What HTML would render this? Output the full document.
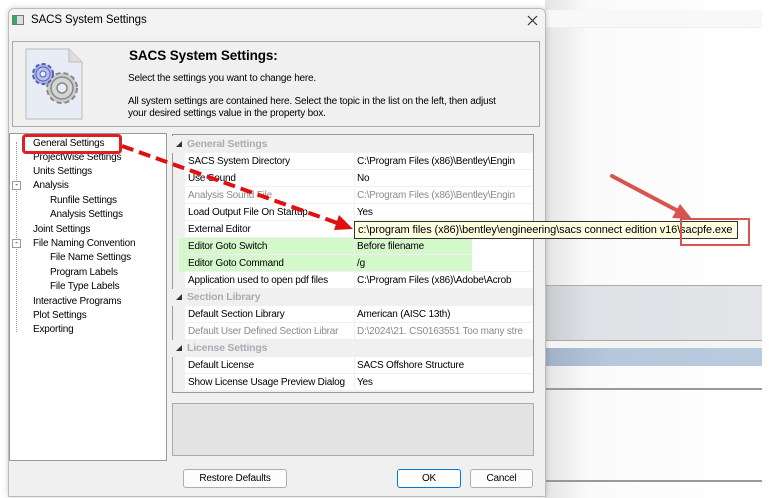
<!DOCTYPE html>
<html><head><style>
*{margin:0;padding:0;box-sizing:border-box}
body{width:770px;height:498px;overflow:hidden;background:#fff;font-family:"Liberation Sans",sans-serif;font-size:10px;letter-spacing:-0.2px;color:#000;position:relative}
.a{position:absolute}
.row{position:absolute;left:185px;width:348px;height:17px;border-bottom:1px solid #f0f0f0;background:#fff}
.row span{position:absolute;top:0;height:16px;line-height:17px;white-space:nowrap;overflow:hidden}
.row .n{left:3px;width:166px}
.row .v{left:169px;width:178px;border-left:1px solid #f0f0f0;padding-left:2px}
.hl{background:#d4f7cc}
.hl .v{border-left-color:#e6f9e0}
.cat{position:absolute;left:172px;width:361px;height:17px;color:#a8adb5;font-weight:bold;background:#f0f0f0;font-size:10.5px}
.cat span{position:absolute;left:15px;top:2px}
.cat i{position:absolute;left:4px;top:5px;width:0;height:0;border-left:6px solid transparent;border-bottom:6px solid #333}
.g{color:#8a8a8a}
.t{position:absolute;white-space:nowrap}
.btn{position:absolute;height:19px;border:1px solid #adadad;background:#fdfdfd;border-radius:3px;text-align:center;line-height:17px}
</style></head><body>
<div class="a" style="left:545px;top:0;width:217px;height:498px;background:linear-gradient(90deg,#e4e4e4,#fafafa 20%,#fff)"></div>
<div class="a" style="left:545px;top:10px;width:217px;height:18px;background:#f7f8fa;border-bottom:1px solid #eee"></div>
<div class="a" style="left:545px;top:285px;width:217px;height:55px;background:linear-gradient(90deg,#c8cad0,#dfe1e6 20%,#e2e4e8);border-top:1px solid #aaa"></div>
<div class="a" style="left:545px;top:340px;width:217px;height:8px;background:#f4f4f4;border-top:1px solid #aaa"></div>
<div class="a" style="left:545px;top:348px;width:217px;height:18px;background:linear-gradient(90deg,#9fb0c8,#b7c8de 30%,#b9cadf)"></div>
<div class="a" style="left:545px;top:388px;width:217px;height:2px;background:#999"></div>
<div class="a" style="left:545px;top:480px;width:217px;height:2px;background:#999"></div>

<div class="a" style="left:8px;top:8px;width:538px;height:489px;background:#f0f0f0;border:1px solid #bbb;border-radius:6px 6px 0 0;box-shadow:0 0 6px rgba(0,0,0,.2)"></div>
<div class="a" style="left:9px;top:9px;width:536px;height:26px;background:#f3f3f3;border-radius:6px 6px 0 0"></div>
<div class="a" style="left:12px;top:15px;width:12px;height:10px;border:1px solid #777;background:linear-gradient(90deg,#3a6 0 4px,#ddd 4px)"></div>
<div class="t" style="left:31px;top:14px;font-size:11.5px;letter-spacing:-0.1px">SACS System Settings</div>
<svg class="a" style="left:527px;top:15px" width="11" height="11"><path d="M1 1L10 10M10 1L1 10" stroke="#333" stroke-width="1.2"/></svg>

<div class="a" style="left:12px;top:41px;width:528px;height:86px;border:1px solid #aaa;background:#f0f0f0"></div>
<svg class="a" style="left:25px;top:48px" width="58" height="72" viewBox="0 0 58 72">
<path d="M1 1H44L57 14V71H1Z" fill="#e8ecf6" stroke="#bbb"/><path d="M44 1V14H57" fill="#ddd" stroke="#bbb"/>
<circle cx="37" cy="40" r="15" fill="#ccc" stroke="#888" stroke-width="2" stroke-dasharray="5 3"/><circle cx="37" cy="40" r="11" fill="#d4d4d4" stroke="#888" stroke-width="1.5"/><circle cx="37" cy="40" r="5" fill="#e8ecf6" stroke="#888" stroke-width="1.5"/>
<circle cx="18" cy="26" r="10" fill="#aab4e8" stroke="#5560b0" stroke-width="2" stroke-dasharray="4 2.5"/><circle cx="18" cy="26" r="7" fill="#b8c0ee" stroke="#5560b0"/><circle cx="18" cy="26" r="3" fill="#e8ecf6" stroke="#5560b0"/>
</svg>
<div class="t" style="left:129px;top:48px;font-size:13.5px;font-weight:bold;letter-spacing:-0.1px">SACS System Settings:</div>
<div class="t" style="left:128px;top:73px">Select the settings you want to change here.</div>
<div class="t" style="left:128px;top:96px;line-height:12px">All system settings are contained here. Select the topic in the list on the left, then adjust<br>your desired settings value in the property box.</div>

<div class="a" style="left:9px;top:133px;width:158px;height:328px;background:#fff;border:1px solid #999"></div>
<div class="a" style="left:16px;top:142px;width:0;height:190px;border-left:1px dotted #999"></div>
<div class="t" style="left:33px;top:138px">General Settings</div>
<div class="t" style="left:33px;top:152px">ProjectWise Settings</div>
<div class="t" style="left:33px;top:166px">Units Settings</div>
<div class="t" style="left:33px;top:180px">Analysis</div>
<div class="t" style="left:50px;top:195px">Runfile Settings</div>
<div class="t" style="left:50px;top:209px">Analysis Settings</div>
<div class="t" style="left:33px;top:224px">Joint Settings</div>
<div class="t" style="left:33px;top:238px">File Naming Convention</div>
<div class="t" style="left:50px;top:252px">File Name Settings</div>
<div class="t" style="left:50px;top:267px">Program Labels</div>
<div class="t" style="left:50px;top:281px">File Type Labels</div>
<div class="t" style="left:33px;top:296px">Interactive Programs</div>
<div class="t" style="left:33px;top:310px">Plot Settings</div>
<div class="t" style="left:33px;top:324px">Exporting</div>
<div class="a" style="left:12px;top:181px;width:9px;height:9px;border:1px solid #999;background:#fff;font-size:8px;line-height:6px;text-align:center">-</div>
<div class="a" style="left:12px;top:239px;width:9px;height:9px;border:1px solid #999;background:#fff;font-size:8px;line-height:6px;text-align:center">-</div>
<div class="a" style="left:22px;top:134px;width:100px;height:20px;border:3px solid #e02020;border-radius:4px"></div>

<div class="a" style="left:172px;top:134px;width:362px;height:259px;background:#f0f0f0;border:1px solid #999"></div>
<div class="cat" style="top:136px"><i></i><span>General Settings</span></div>
<div class="row" style="top:153px"><span class="n">SACS System Directory</span><span class="v">C:\Program Files (x86)\Bentley\Engin</span></div>
<div class="row" style="top:170px"><span class="n">Use Sound</span><span class="v">No</span></div>
<div class="row g" style="top:187px"><span class="n">Analysis Sound File</span><span class="v">C:\Program Files (x86)\Bentley\Engin</span></div>
<div class="row" style="top:204px"><span class="n">Load Output File On Startup</span><span class="v">Yes</span></div>
<div class="row" style="top:221px"><span class="n">External Editor</span><span class="v"></span></div>
<div class="a" style="left:179px;top:238px;width:293px;height:34px;background:#d4f7cc"></div>
<div class="row hl" style="top:238px;width:287px"><span class="n">Editor Goto Switch</span><span class="v" style="width:118px">Before filename</span></div>
<div class="row hl" style="top:255px;width:287px"><span class="n">Editor Goto Command</span><span class="v" style="width:118px">/g</span></div>
<div class="a" style="left:472px;top:238px;width:61px;height:34px;background:#fff;border-bottom:1px solid #f0f0f0"></div>
<div class="row" style="top:272px"><span class="n">Application used to open pdf files</span><span class="v">C:\Program Files (x86)\Adobe\Acrob</span></div>
<div class="cat" style="top:289px"><i></i><span>Section Library</span></div>
<div class="row" style="top:306px"><span class="n">Default Section Library</span><span class="v">American (AISC 13th)</span></div>
<div class="row g" style="top:323px"><span class="n">Default User Defined Section Librar</span><span class="v">D:\2024\21. CS0163551 Too many stre</span></div>
<div class="cat" style="top:340px"><i></i><span>License Settings</span></div>
<div class="row" style="top:357px"><span class="n">Default License</span><span class="v">SACS Offshore Structure</span></div>
<div class="row" style="top:374px"><span class="n">Show License Usage Preview Dialog</span><span class="v">Yes</span></div>

<div class="a" style="left:172px;top:403px;width:362px;height:53px;background:#e3e3e3;border:1px solid #aaa"></div>

<div class="btn" style="left:183px;top:469px;width:104px">Restore Defaults</div>
<div class="btn" style="left:397px;top:469px;width:64px;border-color:#0078d7">OK</div>
<div class="btn" style="left:470px;top:469px;width:63px">Cancel</div>

<div class="a" style="left:354px;top:221px;width:384px;height:18px;background:#ffffe1;border:1px solid #333;padding-left:3px;line-height:16px;white-space:nowrap;font-size:11px;letter-spacing:-0.1px">c:\program files (x86)\bentley\engineering\sacs connect edition v16\sacpfe.exe</div>
<div class="a" style="left:680px;top:218px;width:70px;height:28px;border:2px solid #d9534f"></div>

<svg class="a" style="left:0;top:0" width="770" height="498">
<line x1="122" y1="146" x2="340" y2="224" stroke="#e01010" stroke-width="4" stroke-dasharray="12 6"/>
<polygon points="353,229 334,230 339,215" fill="#e01010"/>
<line x1="612" y1="176" x2="680" y2="212" stroke="#d9534f" stroke-width="4" stroke-linecap="round"/>
<polygon points="692,219 672,218 680,204" fill="#d9534f"/>
</svg>
</body></html>
